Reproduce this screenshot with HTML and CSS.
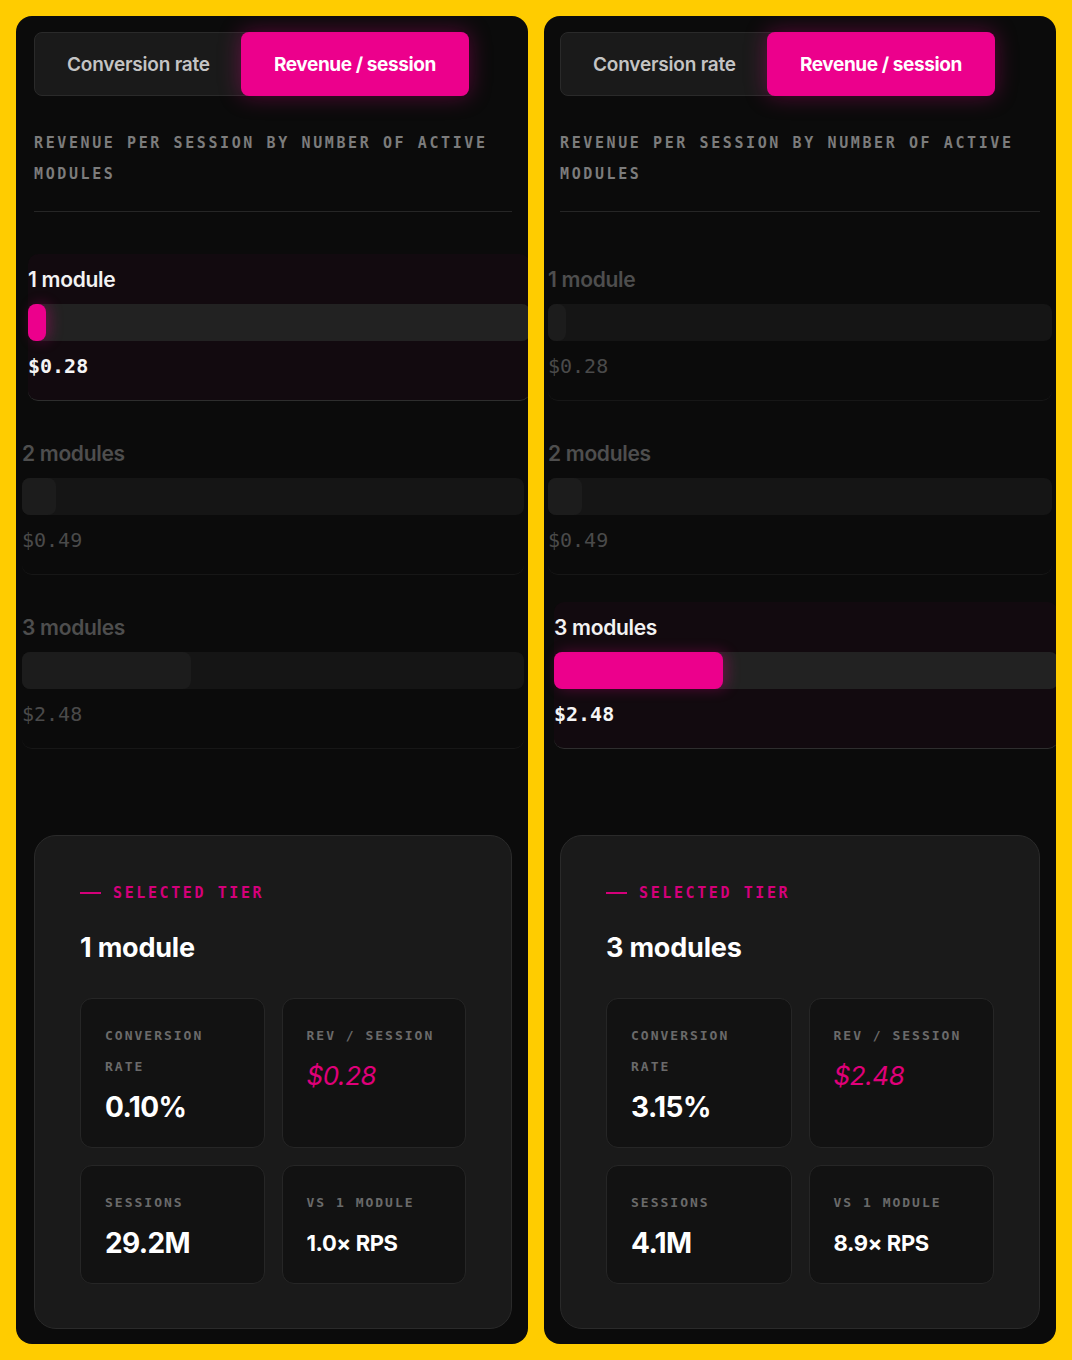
FILE: index.html
```html
<!DOCTYPE html>
<html lang="en">
<head>
    <meta charset="UTF-8">
    <meta name="viewport" content="width=device-width, initial-scale=1.0">
    <title>Revenue per session by modules</title>
    <link rel="stylesheet" href="styles.css">
</head>
<body>
    <div class="board">
        <section class="panel">
            <div class="tabs">
                <button class="tab">Conversion rate</button>
                <button class="tab tab-active">Revenue / session</button>
            </div>
            <p class="chart-title">Revenue per session by number of active modules</p>

            <div class="tiers">
                <div class="tier tier-active">
                    <div class="tier-name">1 module</div>
                    <div class="track"><div class="fill" style="width: 3.6%"></div></div>
                    <div class="tier-value">$0.28</div>
                </div>
                <div class="tier">
                    <div class="tier-name">2 modules</div>
                    <div class="track"><div class="fill" style="width: 6.8%"></div></div>
                    <div class="tier-value">$0.49</div>
                </div>
                <div class="tier">
                    <div class="tier-name">3 modules</div>
                    <div class="track"><div class="fill" style="width: 33.6%"></div></div>
                    <div class="tier-value">$2.48</div>
                </div>
            </div>

            <div class="detail">
                <div class="eyebrow"><span class="dash"></span>Selected tier</div>
                <h2 class="detail-title">1 module</h2>
                <div class="stats">
                    <div class="stat">
                        <div class="stat-label">Conversion rate</div>
                        <div class="stat-value">0.10%</div>
                    </div>
                    <div class="stat">
                        <div class="stat-label">Rev / session</div>
                        <div class="stat-value stat-pink">$0.28</div>
                    </div>
                    <div class="stat">
                        <div class="stat-label">Sessions</div>
                        <div class="stat-value">29.2M</div>
                    </div>
                    <div class="stat">
                        <div class="stat-label">vs 1 module</div>
                        <div class="stat-value stat-small">1.0× RPS</div>
                    </div>
                </div>
            </div>
        </section>

        <section class="panel panel-right">
            <div class="tabs">
                <button class="tab">Conversion rate</button>
                <button class="tab tab-active">Revenue / session</button>
            </div>
            <p class="chart-title">Revenue per session by number of active modules</p>

            <div class="tiers">
                <div class="tier">
                    <div class="tier-name">1 module</div>
                    <div class="track"><div class="fill" style="width: 3.6%"></div></div>
                    <div class="tier-value">$0.28</div>
                </div>
                <div class="tier">
                    <div class="tier-name">2 modules</div>
                    <div class="track"><div class="fill" style="width: 6.8%"></div></div>
                    <div class="tier-value">$0.49</div>
                </div>
                <div class="tier tier-active">
                    <div class="tier-name">3 modules</div>
                    <div class="track"><div class="fill" style="width: 33.6%"></div></div>
                    <div class="tier-value">$2.48</div>
                </div>
            </div>

            <div class="detail">
                <div class="eyebrow"><span class="dash"></span>Selected tier</div>
                <h2 class="detail-title">3 modules</h2>
                <div class="stats">
                    <div class="stat">
                        <div class="stat-label">Conversion rate</div>
                        <div class="stat-value">3.15%</div>
                    </div>
                    <div class="stat">
                        <div class="stat-label">Rev / session</div>
                        <div class="stat-value stat-pink">$2.48</div>
                    </div>
                    <div class="stat">
                        <div class="stat-label">Sessions</div>
                        <div class="stat-value">4.1M</div>
                    </div>
                    <div class="stat">
                        <div class="stat-label">vs 1 module</div>
                        <div class="stat-value stat-small">8.9× RPS</div>
                    </div>
                </div>
            </div>
        </section>
    </div>
</body>
</html>
```

FILE: styles.css
```css
body { margin: 0; background: #ffcc00; font-family: Inter, "Liberation Sans", sans-serif; }
.board { display: grid; grid-template-columns: 1fr 1fr; gap: 16px; padding: 16px; height: 1328px; }
.panel { background: #0b0b0b; border-radius: 16px; padding: 16px 16px 16px 18px; overflow: hidden; }
.panel-right { padding-left: 16px; }

.tabs { display: inline-flex; background: #1a1a1a; border: 1px solid #2a2a2a; border-radius: 8px; height: 64px; box-sizing: border-box; }
.tab { font-family: Inter, "Liberation Sans", sans-serif; font-size: 19px; font-weight: 600; letter-spacing: -0.2px; color: #c4c4c4; background: none; border: 0; padding: 0 33px; border-radius: 8px; margin: -1px; cursor: pointer; }
.tab-active { background: #ec008c; color: #fff; font-weight: 700; letter-spacing: -0.4px; box-shadow: 0 0 22px rgba(236, 0, 140, 0.35); }

.chart-title { margin: 32px 0 0; padding-bottom: 21px; border-bottom: 1px solid #262626; font-family: "DejaVu Sans Mono", monospace; font-size: 15px; font-weight: bold; letter-spacing: 2.6px; line-height: 31px; text-transform: uppercase; color: #7c7c7c; }

.tiers { margin: 42px -12px 0; display: flex; flex-direction: column; gap: 27px; }
.tier { padding: 14px 0 22px; border-bottom: 1px solid #171717; border-radius: 10px; }
.tier-name { font-size: 21px; font-weight: 600; letter-spacing: -0.3px; line-height: 24px; color: #4e4e4e; }
.track { margin: 12px 0 13px; height: 37px; background: #151515; border-radius: 8px; }
.fill { height: 100%; background: #1c1c1c; border-radius: 8px; }
.tier-value { font-family: "DejaVu Sans Mono", monospace; font-size: 20px; line-height: 24px; color: #4a4a4a; }

.tier-active { background: #120a0f; border-bottom-color: #2e2e2e; transform: translateX(6px); }
.tier-active .tier-name { color: #f2f2f2; }
.tier-active .track { background: #222; }
.tier-active .fill { background: #ec008c; box-shadow: 4px 0 14px rgba(236, 0, 140, 0.3); }
.tier-active .tier-value { color: #f4f4f4; font-weight: bold; }

.detail { margin-top: 86px; background: #1a1a1a; border: 1px solid #2a2a2a; border-radius: 22px; padding: 45px 45px 44px; }
.eyebrow { display: flex; align-items: center; gap: 12px; font-family: "DejaVu Sans Mono", monospace; font-size: 15px; font-weight: bold; letter-spacing: 2.6px; line-height: 24px; text-transform: uppercase; color: #d4007a; }
.dash { width: 21px; height: 2px; background: #d4007a; }
.detail-title { margin: 26px 0 33px; font-size: 27px; font-weight: 700; letter-spacing: -0.2px; line-height: 34px; color: #fff; }

.stats { display: grid; grid-template-columns: 1fr 1fr; gap: 17px; }
.stat { background: #121212; border: 1px solid #262626; border-radius: 12px; padding: 21px 24px 25px; }
.stat-label { font-family: "DejaVu Sans Mono", monospace; font-size: 13px; font-weight: bold; letter-spacing: 2px; line-height: 31px; text-transform: uppercase; color: #6a6a6a; }
.stat-value { margin-top: 10px; font-size: 28px; font-weight: 700; letter-spacing: -0.6px; line-height: 30px; color: #fff; }
.stat-pink { font-weight: 400; font-style: italic; color: #e0007a; font-size: 26px; letter-spacing: -0.4px; }
.stat-small { font-size: 22px; letter-spacing: -0.4px; }
```
